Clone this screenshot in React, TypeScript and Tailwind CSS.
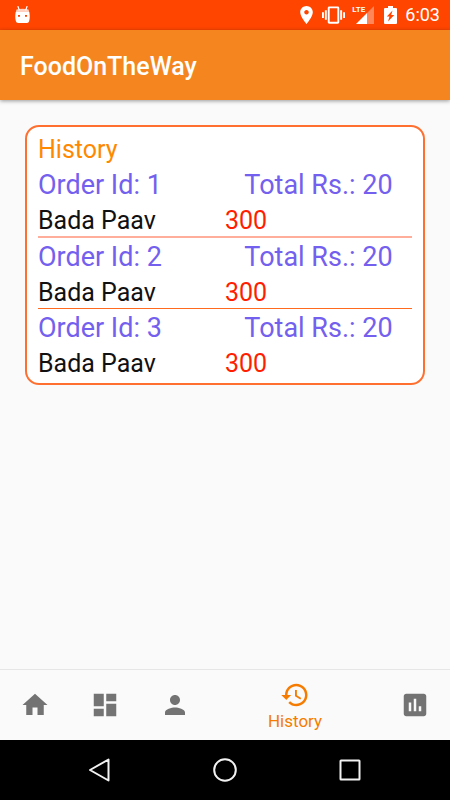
import type { ReactNode } from "react";

const orders = [
  { id: 1, total: 20, item: "Bada Paav", price: 300, divider: "border-b-2 border-[#ffae9b]" },
  { id: 2, total: 20, item: "Bada Paav", price: 300, divider: "border-b border-[#ff6a1f]" },
  { id: 3, total: 20, item: "Bada Paav", price: 300, divider: "" },
];

function StatusBar() {
  return (
    <div className="flex h-[30px] items-center bg-[#ff4500] pl-[15px] pr-[10px] text-white">
      <svg className="mb-0.5 h-[17px] w-[15px]" viewBox="0 0 15 17" fill="currentColor">
        <path d="M3 0.5L4.2 4M12 0.5L10.8 4" stroke="currentColor" strokeWidth="1.2" strokeLinecap="round" />
        <path d="M1.500 3.400Q7.500 2.200 13.500 3.400L14.200 6H0.800Z" opacity="0.75" />
        <path
          fillRule="evenodd"
          d="M0.700 6h13.600q1 5-.2 9.300Q13.700 17 12 17H3Q1.300 17 0.900 15.300-.3 11 0.700 6ZM3 9v1.800h2V9ZM10 9v1.800h2V9Z"
        />
      </svg>
      <div className="ml-auto flex items-center">
        <svg className="h-[18px] w-[13px]" viewBox="5 2 14 20" fill="currentColor">
          <path d="M12 2C8.130 2 5 5.130 5 9c0 5.250 7 13 7 13s7-7.750 7-13c0-3.870-3.130-7-7-7zm0 9.500c-1.380 0-2.500-1.120-2.500-2.500s1.120-2.500 2.500-2.500 2.500 1.120 2.500 2.500-1.120 2.500-2.500 2.500z" />
        </svg>
        <svg className="ml-[9px] h-[18px] w-[23px]" viewBox="0 3 24 18" fill="currentColor">
          <path d="M0 15h2V9H0v6zm3 2h2V7H3v10zm19-8v6h2V9h-2zm-3 8h2V7h-2v10zM16.500 3h-9C6.670 3 6 3.670 6 4.500v15c0 .83.67 1.500 1.500 1.500h9c.83 0 1.500-.67 1.500-1.500v-15c0-.83-.67-1.500-1.500-1.500zM16 19H8V5h8v14z" />
        </svg>
        <div className="relative ml-[11px] h-[18px] w-[18px]">
          <svg className="h-[18px] w-[18px]" viewBox="0 0 18 18" fill="currentColor">
            <path d="M18 0V18H11V7Z" opacity="0.35" />
            <path d="M11 7V18H0Z" />
          </svg>
          <span className="absolute -left-1 -top-0.5 text-[8px] font-bold leading-[12px]">LTE</span>
        </div>
        <svg className="ml-[10px] h-[18px] w-[13px]" viewBox="0 0 13 18" fill="currentColor">
          <path
            fillRule="evenodd"
            d="M4 0h5v2h3q1 0 1 1v14q0 1-1 1H1q-1 0-1-1V3q0-1 1-1h3ZM8.500 4.500L2.800 10.500H5.500L4 15.500 10.300 9H7.200Z"
          />
        </svg>
        <span className="ml-2 text-[18px] leading-[30px]">6:03</span>
      </div>
    </div>
  );
}

function TabButton({ label, children }: { label: string; children: ReactNode }) {
  return (
    <button type="button" aria-label={label} className="flex w-[70px] items-center justify-center text-[#737373]">
      <svg className="size-[30px]" viewBox="0 0 24 24" fill="currentColor">
        {children}
      </svg>
    </button>
  );
}

function BottomTabs() {
  return (
    <nav className="flex h-[71px] border-t border-[#e6e6e6] bg-[#fafafa]">
      <TabButton label="Home">
        <path d="M10 20v-6h4v6h5v-8h3L12 3 2 12h3v8z" />
      </TabButton>
      <TabButton label="Dashboard">
        <path d="M3 13h8V3H3v10zm0 8h8v-6H3v6zm10 0h8V11h-8v10zm0-18v6h8V3h-8z" />
      </TabButton>
      <TabButton label="Profile">
        <path d="M12 12c2.210 0 4-1.790 4-4s-1.790-4-4-4-4 1.790-4 4 1.790 4 4 4zm0 2c-2.670 0-8 1.340-8 4v2h16v-2c0-2.660-5.330-4-8-4z" />
      </TabButton>
      <button
        type="button"
        aria-current="page"
        className="flex flex-1 flex-col items-center justify-center pt-0.5 text-[#f57c00]"
      >
        <svg className="size-[30px]" viewBox="0 0 24 24" fill="currentColor">
          <path d="M13 3c-4.970 0-9 4.030-9 9H1l3.890 3.890.07.14L9 12H6c0-3.870 3.130-7 7-7s7 3.130 7 7-3.130 7-7 7c-1.930 0-3.680-.79-4.940-2.060l-1.420 1.420C8.270 19.990 10.510 21 13 21c4.970 0 9-4.030 9-9s-4.030-9-9-9zm-1 5v5l4.280 2.540.72-1.210-3.500-2.080V8H12z" />
        </svg>
        <span className="text-[17px] leading-[22px]">History</span>
      </button>
      <TabButton label="Reports">
        <path d="M19 3H5c-1.100 0-2 .9-2 2v14c0 1.100.9 2 2 2h14c1.100 0 2-.9 2-2V5c0-1.100-.9-2-2-2zM9 17H7v-7h2v7zm4 0h-2V7h2v10zm4 0h-2v-4h2v4z" />
      </TabButton>
    </nav>
  );
}

function SystemNav() {
  const shapes = [
    { label: "Back", shape: <path d="M4 14L22.500 3.500v21Z" /> },
    { label: "Home screen", shape: <circle cx="14" cy="14" r="10.800" /> },
    { label: "Recent apps", shape: <rect x="4.500" y="4.500" width="19" height="19" rx="0.500" /> },
  ];
  return (
    <div className="grid h-[60px] grid-cols-3 bg-black px-[38px]">
      {shapes.map(({ label, shape }) => (
        <button key={label} type="button" aria-label={label} className="flex items-center justify-center text-[#f2f2f2]">
          <svg
            className="size-7"
            viewBox="0 0 28 28"
            fill="none"
            stroke="currentColor"
            strokeWidth="2"
            strokeLinejoin="round"
          >
            {shape}
          </svg>
        </button>
      ))}
    </div>
  );
}

export default function App() {
  return (
    <div className="flex min-h-screen flex-col bg-[#fafafa] font-[Roboto,sans-serif]">
      <StatusBar />
      <header className="flex h-[70px] items-center bg-[#f5861f] px-5 pt-[3px] shadow-[0_1px_4px_rgba(0,0,0,0.4)]">
        <h1 className="text-[25px] font-medium leading-[30px] text-white">FoodOnTheWay</h1>
      </header>
      <main className="flex-1 p-[25px]">
        <section className="rounded-[14px] border-2 border-[#ff7030] bg-white px-[11px] pb-1 pt-1.5">
          <h2 className="text-[25px] leading-[33px] text-[#ff8800]">History</h2>
          {orders.map((order) => (
            <article key={order.id} className={order.divider}>
              <div className="grid grid-cols-2 text-[27px] leading-[39px] text-[#7460ee]">
                <span>Order Id: {order.id}</span>
                <span className="text-center">Total Rs.: {order.total}</span>
              </div>
              <div className="grid grid-cols-2 text-[25px] leading-[31px] text-[#111111]">
                <span>{order.item}</span>
                <span className="text-[#ff1e00]">{order.price}</span>
              </div>
            </article>
          ))}
        </section>
      </main>
      <BottomTabs />
      <SystemNav />
    </div>
  );
}
